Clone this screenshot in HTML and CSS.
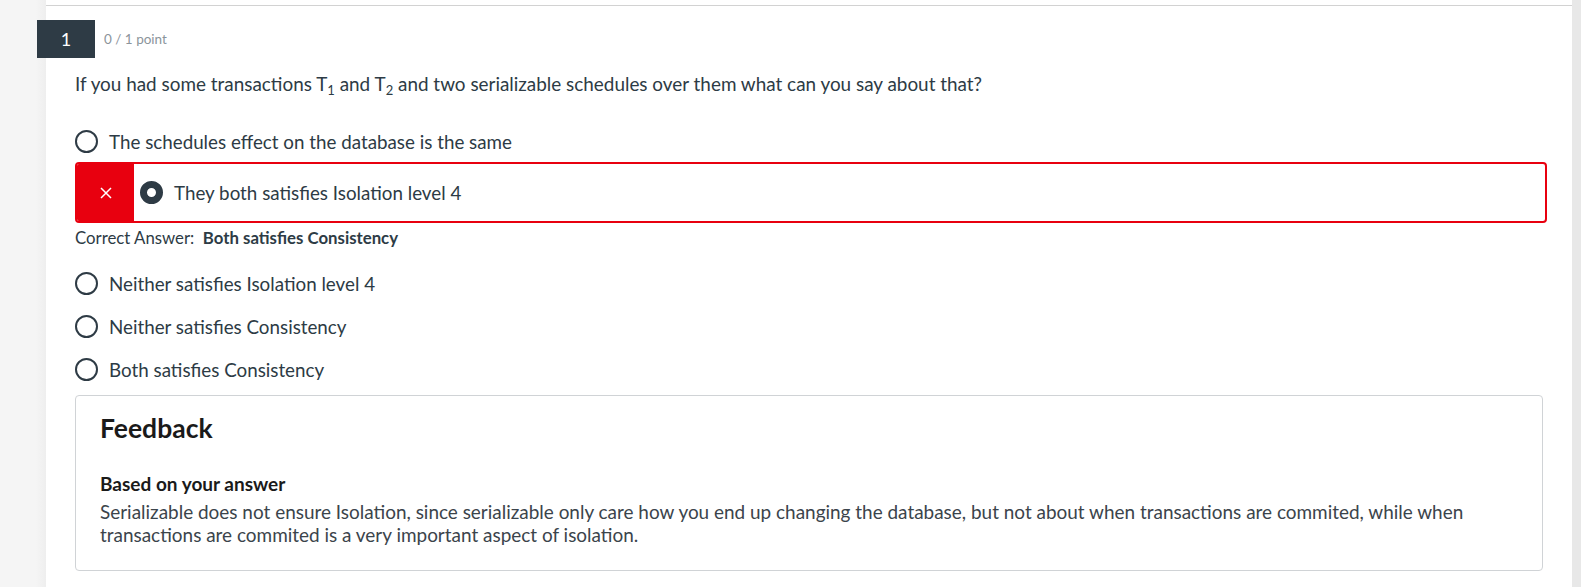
FILE: index.html
```html
<!DOCTYPE html>
<html>
<head>
<meta charset="utf-8">
<link rel="stylesheet" href="styles.css">
</head>
<body>
<div class="page">
  <div class="gutter"></div>
  <main class="card">
    <div class="topline"></div>
    <div class="qhead">
      <div class="qnum">1</div>
      <div class="qpoints">0 / 1 point</div>
    </div>
    <p class="question">If you had some transactions T<sub>1</sub> and T<sub>2</sub> and two serializable schedules over them what can you say about that?</p>
    <div class="options">
      <div class="opt opt-first"><span class="radio"></span><span class="label">The schedules effect on the database is the same</span></div>
      <div class="opt-wrong">
        <div class="wrong-mark">
          <svg width="12" height="12" viewBox="0 0 12 12"><path d="M1 1L11 11M11 1L1 11" stroke="#fff" stroke-width="1.5" fill="none"/></svg>
        </div>
        <span class="radio radio-on"></span><span class="label">They both satisfies Isolation level 4</span>
      </div>
      <div class="correct">Correct Answer:&nbsp; <b>Both satisfies Consistency</b></div>
      <div class="opt opt-after"><span class="radio"></span><span class="label">Neither satisfies Isolation level 4</span></div>
      <div class="opt"><span class="radio"></span><span class="label">Neither satisfies Consistency</span></div>
      <div class="opt"><span class="radio"></span><span class="label">Both satisfies Consistency</span></div>
    </div>
    <section class="feedback">
      <h2 class="fb-title">Feedback</h2>
      <h3 class="fb-sub">Based on your answer</h3>
      <p class="fb-text">Serializable does not ensure Isolation, since serializable only care how you end up changing the database, but not about when transactions are commited, while when transactions are commited is a very important aspect of isolation.</p>
    </section>
  </main>
  <div class="rail"></div>
</div>
</body>
</html>
```

FILE: styles.css
```css
html, body {
  margin: 0;
  padding: 0;
  height: 100%;
  overflow: hidden;
}
body {
  font-family: Lato, "Open Sans", sans-serif;
  color: #2d3b45;
  background: #f4f4f4;
}
.page {
  display: flex;
  height: 587px;
}
.gutter {
  width: 46px;
  flex: none;
  background: linear-gradient(to right, #f5f5f5 0, #f5f5f5 36px, #eeeeee 46px);
}
.rail {
  width: 9px;
  flex: none;
  background: #e8e8e8;
}
.card {
  flex: 1;
  background: #fff;
  padding: 5px 0 0 29px;
  display: flex;
  flex-direction: column;
  min-width: 0;
}
.topline {
  height: 1px;
  background: #d2d2d2;
  margin-left: -29px;
}
.qhead {
  display: flex;
  align-items: center;
  margin: 14px 0 0 -38px;
}
.qnum {
  width: 58px;
  height: 38px;
  background: #2e3b45;
  color: #fff;
  font-size: 18px;
  display: flex;
  align-items: center;
  justify-content: center;
}
.qpoints {
  margin-left: 9px;
  font-size: 13.5px;
  color: #8b949b;
}
.question {
  margin: 14px 0 0 0;
  font-size: 18.9px;
  line-height: 24px;
}
.question sub {
  font-size: 13px;
  line-height: 0;
  vertical-align: -4px;
}
.options {
  display: flex;
  flex-direction: column;
}
.opt {
  display: flex;
  align-items: center;
  height: 24px;
  margin-top: 19px;
  font-size: 18.8px;
}
.opt-first {
  margin-top: 33px;
}
.opt-after {
  margin-top: 23px;
}
.radio {
  width: 19px;
  height: 19px;
  border: 2px solid #2e3b45;
  border-radius: 50%;
  flex: none;
  margin-right: 11px;
}
.radio-on {
  width: 9px;
  height: 9px;
  border-width: 7px;
  margin-left: 6px;
}
.opt-wrong {
  display: flex;
  align-items: center;
  height: 57px;
  border: 2px solid #e8000f;
  border-radius: 4px;
  margin: 9px 25px 0 0;
  font-size: 18.8px;
  overflow: hidden;
}
.wrong-mark {
  width: 57px;
  align-self: stretch;
  background: #e8000f;
  display: flex;
  align-items: center;
  justify-content: center;
  flex: none;
}
.correct {
  margin-top: 5px;
  font-size: 16.8px;
  line-height: 20px;
}
.correct b {
  font-weight: 700;
}
.feedback {
  margin: 14px 29px 0 0;
  height: 176px;
  border: 1px solid #d0d3d6;
  border-radius: 4px;
  padding: 0 24px;
  box-sizing: border-box;
}
.fb-title {
  margin: 14px 0 0 0;
  font-size: 26.5px;
  line-height: 36px;
  font-weight: 700;
  color: #1a1a1a;
}
.fb-sub {
  margin: 26px 0 0 0;
  font-size: 19px;
  line-height: 24px;
  font-weight: 700;
  color: #1a1a1a;
}
.fb-text {
  margin: 5px 0 0 0;
  font-size: 18.95px;
  line-height: 22.5px;
  color: #3b444b;
}
.label {
  white-space: nowrap;
}
```
